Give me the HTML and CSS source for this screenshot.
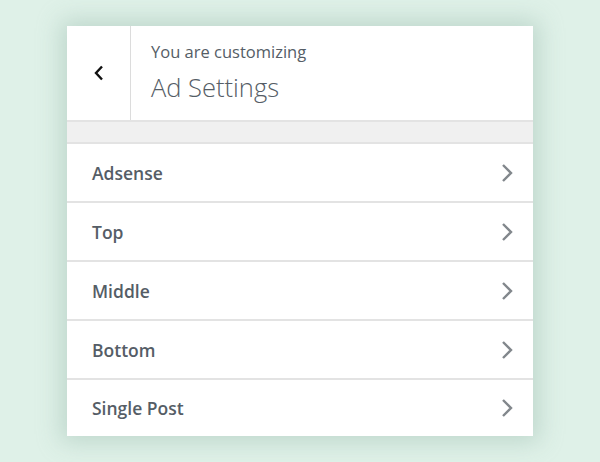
FILE: index.html
```html
<!DOCTYPE html>
<html>
<head>
<meta charset="utf-8">
<link rel="stylesheet" href="styles.css">
</head>
<body>
<div class="panel">
  <div class="header">
    <div class="back">
      <svg width="12" height="16" viewBox="0 0 12 16"><path d="M9 1.5 L3 8 L9 14.5" fill="none" stroke="#111" stroke-width="2.4"/></svg>
    </div>
    <div class="title">
      <div class="sub">You are customizing</div>
      <div class="main">Ad Settings</div>
    </div>
  </div>
  <div class="band"></div>
  <div class="row"><span>Adsense</span><svg class="chev" width="12" height="20" viewBox="0 0 12 20"><path d="M2 2 L10 10 L2 18" fill="none" stroke="#82878c" stroke-width="2.4"/></svg></div>
  <div class="row"><span>Top</span><svg class="chev" width="12" height="20" viewBox="0 0 12 20"><path d="M2 2 L10 10 L2 18" fill="none" stroke="#82878c" stroke-width="2.4"/></svg></div>
  <div class="row"><span>Middle</span><svg class="chev" width="12" height="20" viewBox="0 0 12 20"><path d="M2 2 L10 10 L2 18" fill="none" stroke="#82878c" stroke-width="2.4"/></svg></div>
  <div class="row"><span>Bottom</span><svg class="chev" width="12" height="20" viewBox="0 0 12 20"><path d="M2 2 L10 10 L2 18" fill="none" stroke="#82878c" stroke-width="2.4"/></svg></div>
  <div class="row last"><span>Single Post</span><svg class="chev" width="12" height="20" viewBox="0 0 12 20"><path d="M2 2 L10 10 L2 18" fill="none" stroke="#82878c" stroke-width="2.4"/></svg></div>
</div>
</body>
</html>
```
FILE: styles.css
```css
html, body {
  margin: 0;
  padding: 0;
}
body {
  width: 600px;
  height: 462px;
  background: #dff1e8;
  font-family: "Open Sans", "Noto Sans", sans-serif;
  overflow: hidden;
  padding-top: 26px;
  box-sizing: border-box;
}
.panel {
  margin-left: 67px;
  width: 466px;
  background: #fff;
  box-shadow: 0 0 22px 6px rgba(150, 185, 170, 0.45);
}
.header {
  display: flex;
  height: 94px;
}
.back {
  width: 64px;
  border-right: 1px solid #dcdcdc;
  display: flex;
  align-items: center;
  justify-content: center;
  padding-left: 1px;
  box-sizing: border-box;
}
.title {
  padding-left: 20px;
  padding-top: 16px;
  color: #555d66;
}
.sub {
  font-size: 16.5px;
  line-height: 20px;
  color: #555d66;
}
.main {
  font-size: 25.5px;
  font-weight: 300;
  line-height: 32px;
  margin-top: 9px;
  color: #555d66;
}
.band {
  height: 20px;
  background: #f0f0f0;
  border-top: 2px solid #e3e3e3;
  border-bottom: 2px solid #e3e3e3;
}
.row {
  height: 57px;
  border-bottom: 2px solid #e3e3e3;
  display: flex;
  align-items: center;
  justify-content: space-between;
  padding: 0 20px 0 25px;
  font-size: 17.5px;
  font-weight: 600;
  color: #555d66;
}
.row.last {
  border-bottom: none;
  height: 56px;
}
.chev {
  display: block;
}
```
